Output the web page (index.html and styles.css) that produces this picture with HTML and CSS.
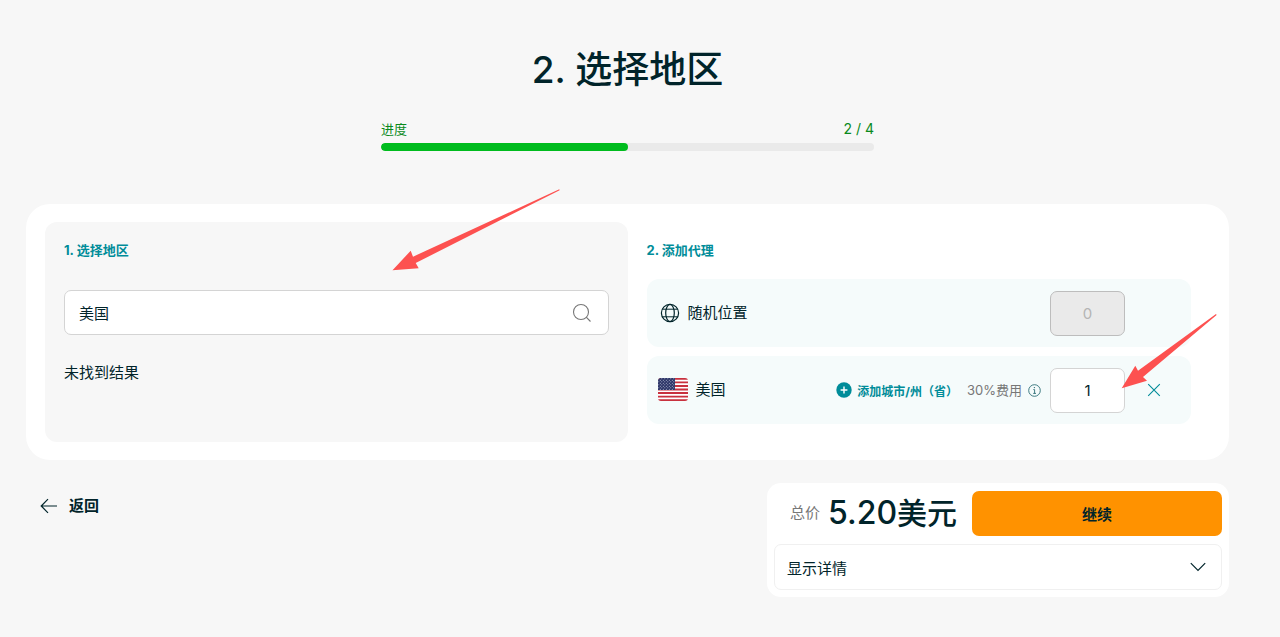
FILE: index.html
```html
<!DOCTYPE html>
<html lang="zh-CN">
<head>
    <meta charset="UTF-8">
    <meta name="viewport" content="width=device-width, initial-scale=1.0">
    <title>选择地区</title>
    <link rel="stylesheet" href="styles.css">
</head>
<body>
    <main class="container">
        <h1>2. 选择地区</h1>

        <div class="progress">
            <div class="progress-text">
                <span>进度</span>
                <span class="step">2 / 4</span>
            </div>
            <div class="progress-bar">
                <div class="progress-fill" style="width: 50%"></div>
            </div>
        </div>

        <div class="card">
            <section class="panel panel-search">
                <h2>1. 选择地区</h2>
                <div class="search-box">
                    <input type="text" id="search" class="search-input" value="美国" aria-label="选择地区">
                    <svg class="search-icon" width="20" height="20" viewBox="0 0 20 20" fill="none" stroke="#777" stroke-width="1.1">
                        <circle cx="9" cy="9" r="7.5"/>
                        <path d="M14.2 14.2 18.5 18.5"/>
                    </svg>
                </div>
                <p class="no-result">未找到结果</p>
            </section>

            <section class="panel">
                <h2>2. 添加代理</h2>
                <div class="row">
                    <svg class="globe" width="20" height="20" viewBox="0 0 20 20" fill="none" stroke="#01242a" stroke-width="1.2">
                        <circle cx="10" cy="10" r="8.6"/>
                        <ellipse cx="10" cy="10" rx="4.3" ry="8.6"/>
                        <path d="M2.4 6.2h15.2M2.4 13.8h15.2" stroke-width="1"/>
                    </svg>
                    <label for="random-count" class="row-name">随机位置</label>
                    <input type="text" id="random-count" class="count" value="0" disabled>
                    <div class="slot"></div>
                </div>
                <div class="row">
                    <svg class="flag" width="30" height="24" viewBox="0 0 30 24">
                        <defs>
                            <clipPath id="flag-clip"><rect width="30" height="23" rx="3"/></clipPath>
                            <pattern id="stars" width="3" height="3" patternUnits="userSpaceOnUse">
                                <rect width="3" height="3" fill="#2b3467"/>
                                <circle cx=".8" cy=".8" r=".5" fill="#c3c8dc"/>
                                <circle cx="2.3" cy="2.3" r=".5" fill="#c3c8dc"/>
                            </pattern>
                        </defs>
                        <g clip-path="url(#flag-clip)">
                            <rect width="30" height="23" fill="#fff"/>
                            <path d="M0 .9h30M0 4.4h30M0 8h30M0 11.5h30M0 15h30M0 18.6h30M0 22.1h30" stroke="#c8313e" stroke-width="1.8"/>
                            <rect width="17" height="12" fill="url(#stars)"/>
                        </g>
                    </svg>
                    <label for="us-count" class="row-name">美国</label>
                    <button type="button" class="add-city">
                        <svg width="16" height="16" viewBox="0 0 16 16">
                            <circle cx="8" cy="8" r="7.7" fill="#008c99"/>
                            <path d="M8 4.6v6.8M4.6 8h6.8" stroke="#fff" stroke-width="1.4"/>
                        </svg>
                        添加城市/州（省）
                    </button>
                    <span class="fee">30%费用
                        <svg width="13" height="13" viewBox="0 0 13 13" fill="none" stroke="#2b6d75">
                            <circle cx="6.5" cy="6.5" r="5.8" stroke-width=".9"/>
                            <path d="M5.3 5.6h1.3v3.8M5.2 9.4h2.8" stroke-width=".9"/>
                            <circle cx="6.4" cy="3.6" r=".7" fill="#2b6d75" stroke="none"/>
                        </svg>
                    </span>
                    <input type="text" id="us-count" class="count" value="1">
                    <div class="slot">
                        <button type="button" class="remove" aria-label="删除">
                            <svg width="14" height="14" viewBox="0 0 14 14" stroke="#008c99" stroke-width="1.1">
                                <path d="M1.2 1.2 12.8 12.8M12.8 1.2 1.2 12.8"/>
                            </svg>
                        </button>
                    </div>
                    <svg class="arrow arrow-count" width="96" height="76" viewBox="0 0 96 76">
                        <path d="M.7 75.3 14.3 52.7 17 57.7 95 1 95.6 2 22 64 26 67.7Z" fill="#fd5150"/>
                    </svg>
                </div>
            </section>

            <svg class="arrow arrow-search" width="168" height="82" viewBox="0 0 168 82">
                <path d="M.5 81.3 18.7 61.7 21 67.7 167.3.3 167.6 1.3 23.7 74 26.7 79.3Z" fill="#fd5150"/>
            </svg>
        </div>

        <div class="footer">
            <a href="#" class="back">
                <svg width="18" height="16" viewBox="0 0 18 16" fill="none" stroke="#01242a" stroke-width="1.2">
                    <path d="M17 8H1.2M8 1.2 1.2 8 8 14.8"/>
                </svg>
                返回
            </a>
            <div class="summary">
                <div class="summary-top">
                    <span class="total-label">总价</span>
                    <span class="total"><span class="amount">5.20</span>美元</span>
                    <button type="button" class="continue">继续</button>
                </div>
                <button type="button" class="details">
                    显示详情
                    <svg width="16" height="10" viewBox="0 0 16 10" fill="none" stroke="#01242a" stroke-width="1.2">
                        <path d="M.8 1.2 8 8.5 15.2 1.2"/>
                    </svg>
                </button>
            </div>
        </div>
    </main>
</body>
</html>
```
FILE: styles.css
```css
* {
    box-sizing: border-box;
}
body {
    margin: 0;
    background-color: #f7f7f7;
    color: #01242a;
    font-family: Inter, 'Noto Sans CJK SC', sans-serif;
    font-size: 15px;
    line-height: 24px;
}
button, input {
    font-family: inherit;
    font-size: 15px;
    color: inherit;
}
button {
    padding: 0;
    border: none;
    background: none;
    cursor: pointer;
}
svg {
    display: block;
    flex-shrink: 0;
}
.container {
    padding: 46px 51px 40px 26px;
}
h1 {
    margin: 0 0 23px;
    font-size: 37px;
    font-weight: 500;
    line-height: 48px;
    text-align: center;
}
h2 {
    margin: 0;
    font-size: 13px;
    font-weight: 700;
    line-height: 20px;
    color: #008c99;
}

/* progress */
.progress {
    max-width: 493px;
    margin: 0 auto 53px;
}
.progress-text {
    display: flex;
    justify-content: space-between;
    margin-bottom: 2px;
    color: #0a8a1c;
    font-size: 13px;
}
.step {
    font-size: 14px;
}
.progress-bar {
    height: 8px;
    border-radius: 4px;
    background-color: #eaeaea;
    overflow: hidden;
}
.progress-fill {
    height: 100%;
    border-radius: 4px;
    background-color: #00bc1e;
}

/* main card */
.card {
    position: relative;
    display: grid;
    grid-template-columns: 1fr 1fr;
    padding: 18px 19px;
    border-radius: 24px;
    background-color: #fff;
}
.panel {
    padding: 18px 19px;
    border-radius: 12px;
}
.panel-search {
    background-color: #f7f7f7;
}
.search-box {
    display: flex;
    align-items: center;
    height: 45px;
    margin-top: 30px;
    padding-right: 16px;
    border: 1px solid #d4d4d4;
    border-radius: 7px;
    background-color: #fff;
}
.search-input {
    flex: 1;
    height: 100%;
    padding: 0 14px;
    border: none;
    outline: none;
    background: none;
}
.no-result {
    margin: 26px 0 0;
}
.row {
    position: relative;
    display: flex;
    align-items: center;
    height: 68px;
    padding: 0 8px 0 11px;
    border-radius: 12px;
    background-color: #f5fbfb;
}
h2 + .row {
    margin-top: 19px;
}
.row + .row {
    margin-top: 9px;
}
.globe {
    margin: 0 8px 0 2px;
}
.flag {
    margin-right: 8px;
}
.row-name {
    flex: 1;
}
.add-city {
    display: flex;
    align-items: center;
    gap: 5px;
    margin-right: 9px;
    font-size: 12px;
    font-weight: 700;
    color: #008c99;
}
.fee {
    display: flex;
    align-items: center;
    gap: 6px;
    margin-right: 9px;
    font-size: 13px;
    color: #777;
}
.count {
    width: 75px;
    height: 45px;
    border: 1px solid #d4d4d4;
    border-radius: 7px;
    background-color: #fff;
    text-align: center;
}
.count:disabled {
    border-color: #bdbdbd;
    background-color: #eaeaea;
    color: #b4b4b4;
}
.slot {
    display: flex;
    justify-content: center;
    width: 58px;
}

/* red arrows drawn over the card */
.arrow {
    position: absolute;
    pointer-events: none;
}
.arrow-search {
    left: 366px;
    top: -15px;
}
.arrow-count {
    right: -26px;
    top: -43px;
}

/* footer */
.footer {
    display: flex;
    justify-content: space-between;
    align-items: flex-start;
    margin-top: 23px;
}
.back {
    display: flex;
    align-items: center;
    gap: 11px;
    height: 45px;
    padding-left: 14px;
    color: inherit;
    font-weight: 700;
    text-decoration: none;
}
.summary {
    width: 462px;
    padding: 7px;
    border-radius: 14px;
    background-color: #fff;
}
.summary-top {
    display: flex;
    align-items: center;
    margin-bottom: 8px;
}
.total-label {
    margin: 0 8px 0 16px;
    color: #777;
}
.total {
    margin-right: 15px;
    font-size: 30px;
    font-weight: 500;
    line-height: 45px;
    white-space: nowrap;
}
.amount {
    font-size: 32px;
}
.continue {
    flex: 1;
    height: 45px;
    border-radius: 7px;
    background-color: #ff9200;
    font-weight: 700;
}
.details {
    display: flex;
    justify-content: space-between;
    align-items: center;
    width: 100%;
    height: 46px;
    padding: 0 15px 0 12px;
    border: 1px solid #f0f0f0;
    border-radius: 7px;
}
```
